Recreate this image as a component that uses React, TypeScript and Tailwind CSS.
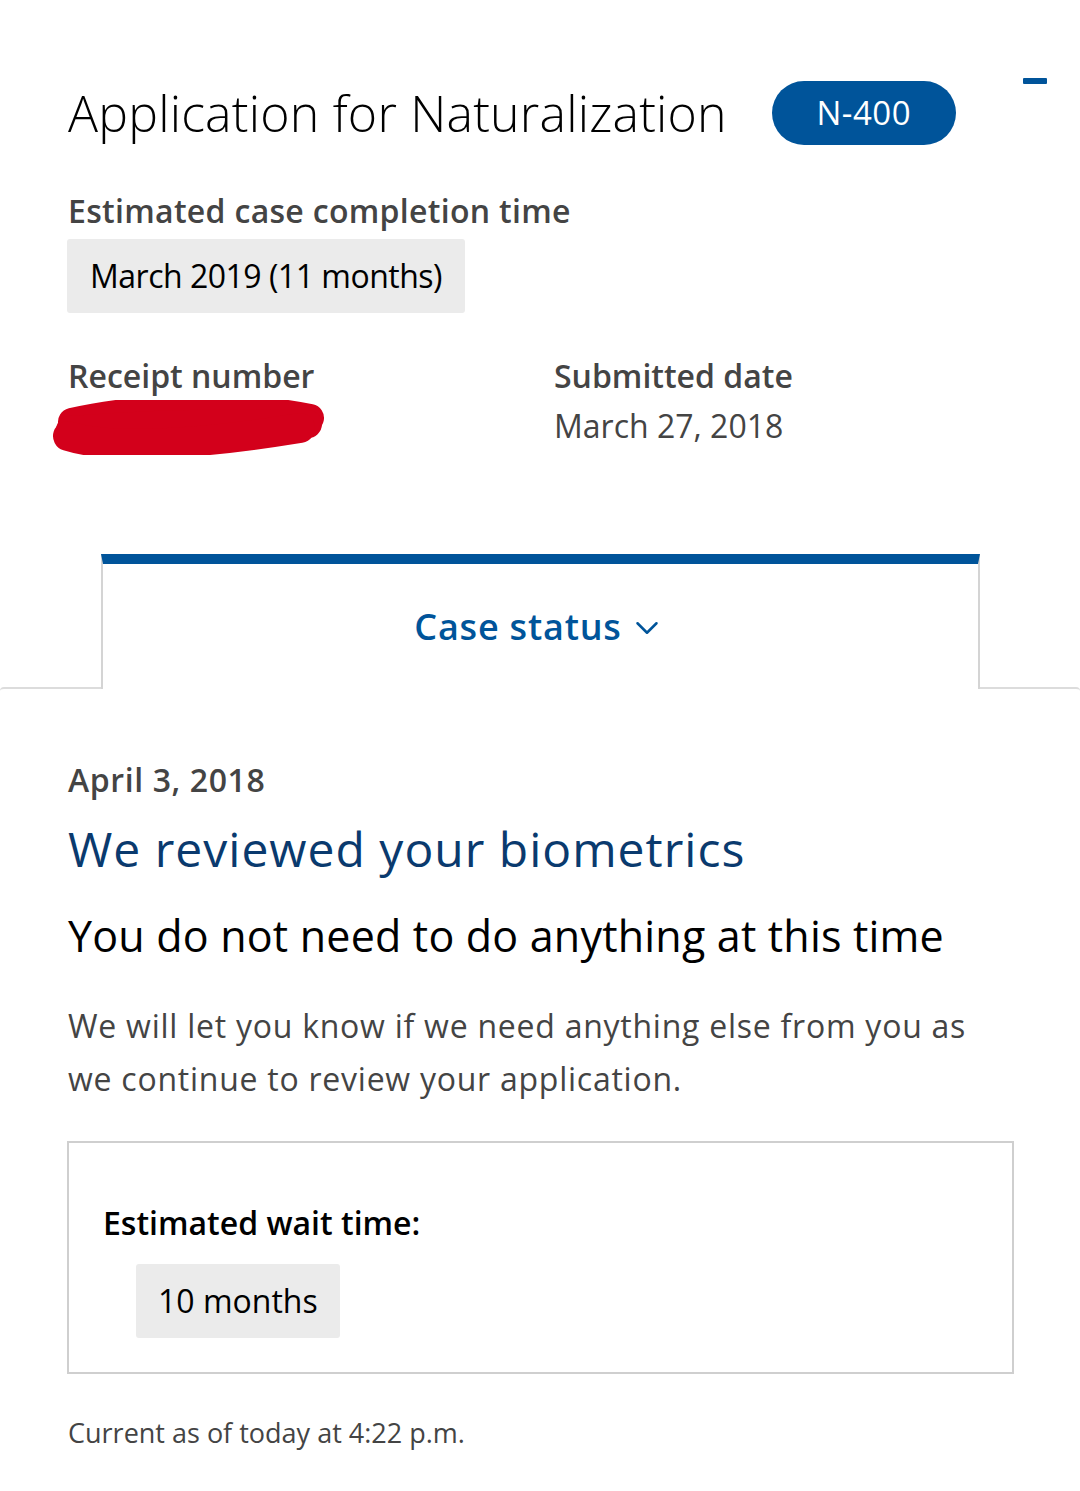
import { ChevronDown } from "lucide-react";

const font = { fontFamily: "'Open Sans', Lato, sans-serif" };

function Redaction() {
  return (
    <svg width="276" height="55" viewBox="0 0 276 55" className="-ml-[16px] block">
      <g fill="none" stroke="#d3001b" strokeLinecap="round">
        <path d="M20 22 C 80 8, 180 2, 258 18" strokeWidth="28" />
        <path d="M18 30 C 90 24, 180 22, 256 24" strokeWidth="28" />
        <path d="M16 36 C 60 50, 150 44, 248 28" strokeWidth="30" />
      </g>
    </svg>
  );
}

export default function App() {
  return (
    <div className="min-h-[1491px] bg-white text-black" style={font}>
      {/* header */}
      <div className="pl-[68px] pr-[33px] pt-[81px]">
        <div className="flex items-center">
          <h1 className="text-[50px] leading-[56px] font-light tracking-[0.2px] text-black">
            Application for Naturalization
          </h1>
          <span className="ml-[45px] flex h-[64px] w-[184px] items-center justify-center rounded-full bg-[#00549a] text-[33px] tracking-[0.5px] text-white">
            N-400
          </span>
          <span className="ml-auto -mt-[64px] block h-[6px] w-[24px] rounded-[1px] bg-[#00549a]" />
        </div>

        <div className="mt-[46px] text-[32px] leading-[40px] font-semibold tracking-[0.3px] text-[#444]">
          Estimated case completion time
        </div>
        <div className="mt-[8px] -ml-px inline-flex h-[74px] items-center rounded-[3px] bg-[#ebebeb] px-[23px] text-[32px] tracking-[-0.5px] text-black">
          March 2019 (11 months)
        </div>

        <div className="mt-[43px] grid grid-cols-[486px_1fr]">
          <div>
            <div className="text-[32px] leading-[40px] font-semibold text-[#444]">Receipt number</div>
            <div className="mt-[4px]">
              <Redaction />
            </div>
          </div>
          <div>
            <div className="text-[32px] leading-[40px] font-semibold text-[#444]">Submitted date</div>
            <div className="mt-[10px] text-[32px] leading-[40px] text-[#444]">March 27, 2018</div>
          </div>
        </div>
      </div>

      {/* tab */}
      <div className="mt-[99px] flex justify-center">
        <div className="relative z-10 -mb-[2px] flex h-[135px] w-[879px] items-center justify-center border-x-2 border-t-[10px] border-x-[#d4d4d4] border-t-[#00549a] bg-white">
          <span className="text-[36px] font-semibold tracking-[0.8px] text-[#00549a]">Case status</span>
          <ChevronDown className="ml-[6px] mt-[2px] text-[#00549a]" size={38} strokeWidth={1.6} />
        </div>
      </div>

      {/* panel */}
      <div className="rounded-t-[4px] border-t-2 border-[#dcdcdc] pl-[68px] pr-[66px] pt-[71px] pb-[40px]">
        <div className="text-[32px] leading-[40px] font-semibold tracking-[0.6px] text-[#444]">April 3, 2018</div>
        <h2 className="mt-[21px] text-[48px] leading-[56px] font-normal tracking-[1px] text-[#0a3a6e]">
          We reviewed your biometrics
        </h2>
        <h3 className="mt-[33px] text-[43px] leading-[52px] tracking-[0.2px] text-black">
          You do not need to do anything at this time
        </h3>
        <p className="mt-[37px] max-w-[930px] text-[32px] leading-[53px] tracking-[0.75px] text-[#444]">
          We will let you know if we need anything else from you as we continue to review your application.
        </p>

        <div className="mt-[36px] -ml-px border-2 border-[#cfcfcf] pl-[34px] pt-[60px] pb-[34px]">
          <div className="text-[32px] leading-[40px] font-semibold text-black">Estimated wait time:</div>
          <div className="ml-[33px] mt-[21px] inline-flex h-[74px] items-center rounded-[3px] bg-[#ebebeb] px-[22px] text-[32px] text-black">
            10 months
          </div>
        </div>

        <div className="mt-[41px] text-[27px] leading-[36px] text-[#444]">
          Current as of today at 4:22 p.m.
        </div>
      </div>
    </div>
  );
}
